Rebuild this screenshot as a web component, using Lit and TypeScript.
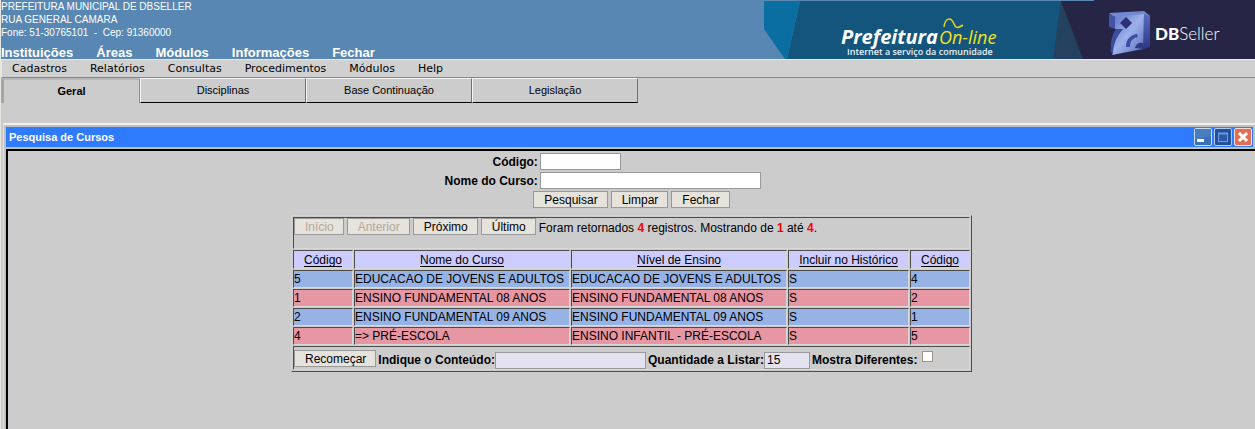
import { LitElement, html, css, svg } from "lit";
import { customElement, state } from "lit/decorators.js";
import { classMap } from "lit/directives/class-map.js";

interface Course {
  id: string;
  name: string;
  level: string;
  history: string;
  levelId: string;
}

const courses: Course[] = [
  { id: "5", name: "EDUCACAO DE JOVENS E ADULTOS", level: "EDUCACAO DE JOVENS E ADULTOS", history: "S", levelId: "4" },
  { id: "1", name: "ENSINO FUNDAMENTAL 08 ANOS", level: "ENSINO FUNDAMENTAL 08 ANOS", history: "S", levelId: "2" },
  { id: "2", name: "ENSINO FUNDAMENTAL 09 ANOS", level: "ENSINO FUNDAMENTAL 09 ANOS", history: "S", levelId: "1" },
  { id: "4", name: "=> PRÉ-ESCOLA", level: "ENSINO INFANTIL - PRÉ-ESCOLA", history: "S", levelId: "5" },
];

@customElement("app-header")
export class AppHeader extends LitElement {
  static styles = css`
    :host {
      display: flex;
      justify-content: space-between;
      background: #5787b2;
      color: #fff;
      font: 10px/13px "Liberation Sans", sans-serif;
    }
    .address { font-style: normal; height: 46px; }
    .nav { display: flex; gap: 23px; font-size: 13px; font-weight: bold; }
    .nav a { color: inherit; text-decoration: none; }
    .banner { display: block; flex: none; }
    .brand { font: italic bold 20px "Open Sans", sans-serif; }
    .online { font: italic 18px "Open Sans", sans-serif; }
    .slogan { font: 600 9px "Open Sans", sans-serif; }
    .maker { font: 17px "Lato", sans-serif; font-weight: 300; }
    .strong { font-weight: 900; }
  `;

  private banner() {
    return svg`
      <defs>
        <linearGradient id="cube" x1="0" y1="0" x2="1" y2="1">
          <stop offset="0" stop-color="#5c70c4"></stop>
          <stop offset="0.5" stop-color="#9db2ea"></stop>
          <stop offset="1" stop-color="#5468bb"></stop>
        </linearGradient>
        <linearGradient id="side" x1="0" y1="0" x2="0" y2="1">
          <stop offset="0" stop-color="#5a6dc0"></stop>
          <stop offset="1" stop-color="#2a3580"></stop>
        </linearGradient>
      </defs>
      <path d="M36 1H330V59H23Z" fill="#13557c"></path>
      <path d="M0 1H36L23 59H21L0 29Z" fill="#0a6fa0"></path>
      <path d="M297 1L289 59H330V1Z" fill="#24415f"></path>
      <path d="M297 1H330V0H491V59H319Z" fill="#262545"></path>
      <path d="M345 13L380 11L386 16L352 19Z" fill="#7389d4"></path>
      <path d="M380 14L386 16V47L377 50Z" fill="url(#side)"></path>
      <path d="M345 14L352 17V29L345 27Z" fill="#4353a8"></path>
      <path d="M351 17L380 14L379 49L348 55C348 46 351 37 359 29L351 29Z" fill="url(#cube)"></path>
      <path d="M352 29L359 29C352 37 349 45 349 55L347 52C346 43 348 35 352 29Z" fill="#3c4c9f"></path>
      <path d="M362 17L368 23L362 29L356 23Z" fill="#2c3079"></path>
      <path d="M362 47C362 40 366 35 373 34L374 37C368 38 366 42 366 47Z" fill="#3c4ba3"></path>
      <path d="M371 48C372 44 375 42 379 43V49Z" fill="#303b88"></path>
      <text class="brand" x="77" y="44" fill="#fff">Prefeitura</text>
      <text class="online" x="175" y="44" fill="#f3e11b">On-line</text>
      <path d="M180 27C181 18 187 16 190 24C192 29 194 28 199 25" fill="none" stroke="#e5d51f" stroke-width="1.5"></path>
      <text class="slogan" x="83" y="55" fill="#e8f2f8">Internet a serviço da comunidade</text>
      <text class="maker" x="391" y="40" fill="#fff"><tspan class="strong">DB</tspan>Seller</text>`;
  }

  render() {
    return html`
      <div>
        <address class="address">
          PREFEITURA MUNICIPAL DE DBSELLER<br />RUA GENERAL CAMARA<br />Fone: 51-30765101 &nbsp;-&nbsp; Cep: 91360000
        </address>
        <nav class="nav">
          ${["Instituições", "Áreas", "Módulos", "Informações", "Fechar"].map((t) => html`<a href="#">${t}</a>`)}
        </nav>
      </div>
      <svg class="banner" width="491" height="59" viewBox="0 0 491 59" role="img" aria-label="Prefeitura On-line, DBSeller">
        ${this.banner()}
      </svg>
    `;
  }
}

@customElement("course-search")
export class CourseSearch extends LitElement {
  static styles = css`
    :host { display: block; padding-top: 2px; font-size: 12px; }
    input, button { box-sizing: border-box; margin: 0; border: 1px solid #999; border-radius: 0; height: 17px; font: 12px/13px "Liberation Sans", sans-serif; color: #000; }
    input { background: #fff; padding: 0 2px; }
    button { background: #e6e2dc; padding: 2px 9px 0 10px; }
    button:disabled { color: #b3aaa0; }
    .fields { display: grid; grid-template-columns: auto 1fr; gap: 2px; width: 374px; margin: 0 auto; align-items: center; }
    .fields label { padding-top: 2px; font-weight: bold; text-align: right; }
    .code { width: 81px; }
    .name { width: 221px; }
    .actions { display: flex; justify-content: center; gap: 3px; margin: 2px 0 7px; }
    .results { margin: 0 auto; border: 1px solid; border-color: #d4d4d4 #4d4d4d #4d4d4d #d4d4d4; border-spacing: 1px; }
    .results td, .results th { border: 1px solid; border-color: #4d4d4d #d8d8d8 #d8d8d8 #4d4d4d; padding: 0; font-weight: normal; text-align: left; line-height: 16px; white-space: nowrap; }
    .results th { background: #ccccff; text-align: center; padding-top: 1px; }
    .results a { color: #000; text-underline-offset: 2px; }
    .blue td { background: #97b3e6; }
    .pink td { background: #e796a4; }
    .id { width: 58px; }
    .wide { width: 214px; }
    .mid { width: 119px; }
    .pager { display: flex; align-items: flex-start; gap: 3px; height: 30px; }
    .count { line-height: 20px; }
    .count b { color: #f00; }
    .filter { display: flex; align-items: flex-start; gap: 2px; box-sizing: border-box; height: 22px; padding-top: 3px; }
    .filter label { display: flex; align-items: center; font-weight: bold; line-height: 20px; }
    .filter input { background: #e4e2f0; }
    .content { width: 151px; }
    .limit { width: 46px; }
    .filter .diff { appearance: none; width: 11px; height: 11px; margin: 0 0 8px 5px; padding: 0; background: #fff; border-color: #a09488; }
  `;

  render() {
    return html`
      <form @submit=${(e: Event) => e.preventDefault()}>
        <div class="fields">
          <label for="code">Código:</label><input class="code" id="code" />
          <label for="name">Nome do Curso:</label><input class="name" id="name" />
        </div>
        <div class="actions">
          <button>Pesquisar</button><button type="reset">Limpar</button><button type="button">Fechar</button>
        </div>
      </form>
      <table class="results">
        <tbody>
          <tr>
            <td colspan="5">
              <div class="pager">
                <button disabled>Início</button><button disabled>Anterior</button><button>Próximo</button><button>Último</button>
                <span class="count">Foram retornados <b>4</b> registros. Mostrando de <b>1</b> até <b>4</b>.</span>
              </div>
            </td>
          </tr>
          <tr>
            <th class="id"><a href="#">Código</a></th>
            <th class="wide"><a href="#">Nome do Curso</a></th>
            <th class="wide"><a href="#">Nível de Ensino</a></th>
            <th class="mid"><a href="#">Incluir no Histórico</a></th>
            <th class="id"><a href="#">Código</a></th>
          </tr>
          ${courses.map(
            (c, i) => html`<tr class=${i % 2 ? "pink" : "blue"}>
              <td>${c.id}</td><td>${c.name}</td><td>${c.level}</td><td>${c.history}</td><td>${c.levelId}</td>
            </tr>`,
          )}
          <tr>
            <td colspan="5">
              <div class="filter">
                <button>Recomeçar</button>
                <label>Indique o Conteúdo:<input class="content" /></label>
                <label>Quantidade a Listar:<input class="limit" .value=${"15"} /></label>
                <label>Mostra Diferentes:<input class="diff" type="checkbox" /></label>
              </div>
            </td>
          </tr>
        </tbody>
      </table>
    `;
  }
}

@customElement("app-root")
export class AppRoot extends LitElement {
  static styles = css`
    :host {
      display: flex;
      flex-direction: column;
      box-sizing: border-box;
      min-height: 100vh;
      border-left: 1px solid #e6e6e0;
      background: #ccc;
      color: #000;
      font: 11px/13px "Liberation Sans", sans-serif;
    }
    .menu { display: flex; gap: 23px; padding: 2px 10px 1px; border: solid; border-width: 1px 0 1px 1px; border-color: #e8e8e8 #888 #888 #e8e8e8; background: #d0d0d0; font: 11px/14px "DejaVu Sans", sans-serif; }
    .menu a { color: #000; text-decoration: none; }
    .tabs { display: flex; height: 25px; margin-bottom: 20px; }
    .tab { box-sizing: border-box; width: 166px; padding: 0; border: solid; border-width: 1px; border-color: #f4f4f4 #707070 #000 #f4f4f4; background: #ccc; font: inherit; color: inherit; }
    .tab.on { width: 139px; border-width: 2px 1px 0 3px; border-color: #b8b8b8 #909090 #ccc #a4a8a4; font-weight: bold; }
    .window { flex: 1; display: flex; flex-direction: column; margin-left: 2px; padding-left: 2px; border-top: 2px solid #f0f0f0; border-left: 1px solid #e0e0e0; background: #c0c0c0; }
    .title { display: flex; align-items: center; justify-content: space-between; height: 20px; margin: 2px 2px 2px 0; padding: 0 1px 0 3px; background: #2e7bff; color: #fff; font-weight: bold; font-size: 11px; }
    .title h1 { margin: 0; font-size: inherit; }
    .controls { display: flex; gap: 2px; }
    .control { display: flex; padding: 0; border: 0; background: none; }
    .body { flex: 1; border: solid #000; border-width: 2px 0 0 2px; background: #ccc; }
  `;

  @state() private tab = "Geral";

  render() {
    return html`
      <app-header></app-header>
      <nav class="menu">
        ${["Cadastros", "Relatórios", "Consultas", "Procedimentos", "Módulos", "Help"].map((t) => html`<a href="#">${t}</a>`)}
      </nav>
      <div class="tabs">
        ${["Geral", "Disciplinas", "Base Continuação", "Legislação"].map(
          (t) => html`<button class=${classMap({ tab: true, on: t === this.tab })} @click=${() => (this.tab = t)}>${t}</button>`,
        )}
      </div>
      <section class="window">
        <header class="title">
          <h1>Pesquisa de Cursos</h1>
          <div class="controls">
            <button class="control" aria-label="Minimizar">
              <svg width="18" height="18" viewBox="0 0 18 18"><rect x="0.5" y="0.5" width="17" height="17" rx="1.5" fill="#3c70b4" stroke="#c9dcf5"></rect><path d="M1 1H17V8L1 12Z" fill="#4a7dbd"></path><rect x="3" y="11" width="7" height="3" fill="#fff"></rect></svg>
            </button>
            <button class="control" aria-label="Maximizar">
              <svg width="18" height="18" viewBox="0 0 18 18"><rect x="0.5" y="0.5" width="17" height="17" rx="1.5" fill="#22509c" stroke="#b4caec"></rect><rect x="4.5" y="5.5" width="9" height="8" fill="#2c5aa6" stroke="#6d9ae0"></rect><path d="M4 5.5H14" stroke="#6d9ae0" stroke-width="2"></path></svg>
            </button>
            <button class="control" aria-label="Fechar">
              <svg width="18" height="18" viewBox="0 0 18 18"><rect x="0.5" y="0.5" width="17" height="17" rx="1.5" fill="#dc6f55" stroke="#f8ddd5"></rect><path d="M5 5L13 13M13 5L5 13" stroke="#fff" stroke-width="3"></path></svg>
            </button>
          </div>
        </header>
        <main class="body"><course-search></course-search></main>
      </section>
    `;
  }
}
